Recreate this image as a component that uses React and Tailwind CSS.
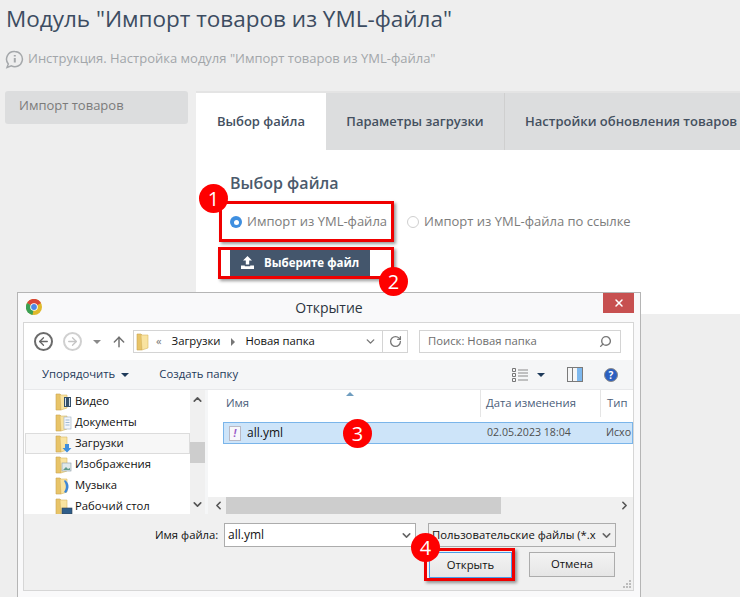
import React from 'react';
import { ArrowLeft, ArrowRight, ArrowUp, ChevronDown, ChevronLeft, ChevronRight, ChevronUp, RotateCw, Search, X } from 'lucide-react';

const navItems = [
  { label: 'Видео', badge: 'video' },
  { label: 'Документы', badge: 'doc' },
  { label: 'Загрузки', badge: 'down', active: true },
  { label: 'Изображения', badge: 'image' },
  { label: 'Музыка', badge: 'music' },
  { label: 'Рабочий стол', badge: 'desk' },
];

const Folder = ({ badge }) => (
  <svg width="18" height="18" viewBox="0 0 18 18" className="shrink-0">
    <path d="M1 1h4l1 1v15H1z" fill="#e8c468" stroke="#c9a552" strokeWidth="0.6" />
    <path d="M5 2h7v13l-6 2z" fill="#f9e3a0" stroke="#d8b865" strokeWidth="0.6" />
    {badge === 'video' && <rect x="9" y="4" width="7" height="10" fill="#35506a" />}
    {badge === 'video' && <path d="M10 5h1v8h-1zM14 5h1v8h-1z" fill="#d7e3ea" />}
    {badge === 'doc' && <rect x="9" y="3" width="7" height="12" fill="#f3f6fa" stroke="#9fb0c0" strokeWidth="0.6" />}
    {badge === 'doc' && <path d="M10.5 6h4M10.5 8.5h4M10.5 11h4" stroke="#7ba0c4" strokeWidth="0.7" />}
    {badge === 'down' && <path d="M10 9h4v4h2.5L12 17.5 7.5 13H10z" fill="#3f8fdd" />}
    {badge === 'image' && <rect x="7" y="7" width="9" height="8" fill="#dfe8ea" stroke="#8a9aa5" strokeWidth="0.6" />}
    {badge === 'image' && <path d="M8 14l3-3 2 2 2-1v2z" fill="#5f9a8a" />}
    {badge === 'music' && <path d="M10 3c4 3 5 8 1 13l-2-1c3-4 2-8 0-11z" fill="#3f87d6" />}
    {badge === 'desk' && <rect x="7" y="10" width="10" height="6" fill="#2f5d8a" stroke="#33404d" strokeWidth="0.6" />}
  </svg>
);

const Chrome = () => (
  <svg width="16" height="16" viewBox="0 0 16 16">
    <circle cx="8" cy="8" r="8" fill="#e0b92b" />
    <path d="M8 8 1 4a8 8 0 0 1 14 0z" fill="#d9453a" />
    <path d="M8 8 1 4a8 8 0 0 0 5.5 11.9z" fill="#3ba055" />
    <circle cx="8" cy="8" r="3.8" fill="#fff" />
    <circle cx="8" cy="8" r="2.9" fill="#4c87e8" />
  </svg>
);

const Marker = ({ n, className }) => (
  <div className={`absolute w-[29px] h-[29px] rounded-full bg-[#fe0000] text-white text-[20px] leading-[29px] text-center ${className}`}>
    {n}
  </div>
);

const RedBox = ({ className }) => (
  <div className={`absolute border-[3px] border-[#f00000] shadow-[2px_2px_3px_rgba(0,0,0,0.4)] ${className}`} />
);

const OpenDialog = () => (
  <div className="absolute left-[17px] top-[292px] w-[624px] h-[305px] flex flex-col bg-[#f9f9fa] border border-[#b5b5b5] border-b-0 font-['Open_Sans',sans-serif] text-[11.3px] text-[#111111]">
    {/* Title bar */}
    <div className="relative h-[29px] shrink-0 flex items-center justify-center">
      <div className="absolute left-[8px] top-[6px]"><Chrome /></div>
      <span className="text-[14px] text-[#2c3540] mt-[-1px]">Открытие</span>
      <div className="absolute right-[6px] top-0 w-[31px] h-[20px] bg-[#c75050] flex items-center justify-center">
        <X size={12} color="#fff" strokeWidth={3} />
      </div>
    </div>

    <div className="mx-[5px] w-[611px] h-[269px] shrink-0 flex flex-col border border-[#d6d6d6] bg-white">
      {/* Address row */}
      <div className="h-[37px] shrink-0 flex items-center pl-[10px]">
        <div className="w-[19px] h-[19px] rounded-full border-2 border-[#6b6b6b] flex items-center justify-center">
          <ArrowLeft size={13} color="#666" strokeWidth={2.4} />
        </div>
        <div className="ml-[10px] w-[19px] h-[19px] rounded-full border-2 border-[#d0d0d0] flex items-center justify-center">
          <ArrowRight size={13} color="#c4c4c4" strokeWidth={2.4} />
        </div>
        <div className="ml-[11px] w-0 h-0 border-x-[4px] border-x-transparent border-t-[4px] border-t-[#8a8a8a]" />
        <ArrowUp size={16} color="#707070" strokeWidth={2.2} className="ml-[10px]" />
        <div className="ml-[6px] w-[275px] h-[23px] flex items-center border border-[#d4d4d4] pl-[2px]">
          <Folder />
          <span className="ml-[2px] text-[#777]">«</span>
          <span className="ml-[10px]">Загрузки</span>
          <div className="ml-[11px] w-0 h-0 border-y-[4px] border-y-transparent border-l-[4px] border-l-[#777]" />
          <span className="ml-[10px]">Новая папка</span>
          <div className="ml-auto w-[24px] h-full flex items-center justify-center">
            <ChevronDown size={13} color="#777" strokeWidth={2.6} />
          </div>
          <div className="w-[25px] h-full border-l border-[#d4d4d4] flex items-center justify-center">
            <RotateCw size={13} color="#777" strokeWidth={2.4} />
          </div>
        </div>
        <div className="ml-[11px] w-[202px] h-[23px] flex items-center justify-between border border-[#d4d4d4] pl-[8px] pr-[8px] text-[#6d6d6d]">
          <span>Поиск: Новая папка</span>
          <Search size={13} color="#777" strokeWidth={2.6} className="-scale-x-100" />
        </div>
      </div>

      {/* Toolbar */}
      <div className="h-[30px] shrink-0 flex items-center bg-[#f5f6f7] border-b border-[#e8e9eb] pl-[18px] pr-[15px] text-[#1e3a5a]">
        <span>Упорядочить</span>
        <div className="ml-[6px] w-0 h-0 border-x-[4px] border-x-transparent border-t-[4px] border-t-[#1e3a5a]" />
        <span className="ml-[30px]">Создать папку</span>
        <svg width="16" height="14" viewBox="0 0 16 14" className="ml-auto">
          <path d="M.5 .5h3v3h-3zM.5 5.5h3v3h-3zM.5 10.5h3v3h-3z" fill="none" stroke="#777" />
          <path d="M6 2h10M6 5h10M6 8h10M6 12h10" stroke="#8a8a8a" strokeWidth="1" />
        </svg>
        <div className="ml-[9px] w-0 h-0 border-x-[4px] border-x-transparent border-t-[4px] border-t-[#1e3a5a]" />
        <div className="ml-[22px] w-[16px] h-[15px] flex border border-[#7a7a7a]">
          <div className="w-[5px] border-r border-[#7a7a7a]" />
          <div className="flex-1" />
          <div className="w-[5px] bg-[#7db8ee]" />
        </div>
        <div className="ml-[21px] w-[14px] h-[14px] rounded-full bg-[#2b5fc0] border border-[#8a8a8a] text-white text-[10px] font-bold leading-[12px] text-center">?</div>
      </div>

      {/* Panes */}
      <div className="h-[124px] shrink-0 flex">
        <div className="w-[166px] shrink-0 pt-[1px] pl-[1px]">
          {navItems.map((item) => (
            <div
              key={item.label}
              className={`h-[21px] flex items-center pl-[29px] border ${item.active ? 'bg-[#f7f7f7] border-[#dcdcdc]' : 'border-transparent'}`}
            >
              <Folder badge={item.badge} />
              <span className="ml-[2px]">{item.label}</span>
            </div>
          ))}
        </div>
        <div className="w-[15px] shrink-0 flex flex-col items-center justify-between bg-[#f0f0f0] py-[3px]">
          <ChevronUp size={13} color="#555" strokeWidth={3} />
          <div className="w-full h-[21px] bg-[#cdcdcd]" />
          <ChevronDown size={13} color="#555" strokeWidth={3} />
        </div>
        <div className="w-[3px] shrink-0 bg-[#f5f6f7]" />

        <div className="flex-1 min-w-0 flex flex-col">
          <div className="relative h-[27px] shrink-0 flex items-center text-[#4c607a]">
            <span className="ml-[18px]">Имя</span>
            <div className="absolute left-[138px] top-[2px] w-0 h-0 border-x-[4px] border-x-transparent border-b-[4px] border-b-[#6f9dbf]" />
            <div className="absolute left-[272px] top-0 h-full border-l border-[#e5e5e5]" />
            <span className="absolute left-[278px]">Дата изменения</span>
            <div className="absolute left-[392px] top-0 h-full border-l border-[#e5e5e5]" />
            <span className="absolute left-[399px]">Тип</span>
          </div>
          <div className="mt-[5px] ml-[15px] h-[22px] shrink-0 flex items-center bg-[#cde4f9] border border-[#7ab5ea] overflow-hidden pl-[5px] whitespace-nowrap">
            <div className="w-[12px] h-[15px] bg-[#f8f8fb] border border-[#b9b9c4] text-[#9a5cc8] text-[10px] font-bold italic leading-[13px] text-center">!</div>
            <span className="ml-[6px] w-[240px] text-[12px]">all.yml</span>
            <span className="text-[#4f4f4f] w-[120px] text-[10.6px]">02.05.2023 18:04</span>
            <span className="text-[#4f4f4f] ml-[-1px] text-[10.6px]">Исхо</span>
          </div>
          <div className="flex-1" />
          <div className="h-[17px] shrink-0 flex items-center bg-[#f0f0f0]">
            <ChevronLeft size={13} color="#555" strokeWidth={3} className="ml-[3px] w-[15px]" />
            <div className="w-[275px] h-full bg-[#cdcdcd]" />
            <ChevronRight size={13} color="#555" strokeWidth={3} className="ml-auto mr-[2px]" />
          </div>
        </div>
      </div>

      {/* Footer */}
      <div className="relative flex-1 bg-[#f0f0f0]">
        <div className="flex items-center mt-[9px]">
          <span className="ml-[131px] w-[69px]">Имя файла:</span>
          <div className="w-[192px] h-[24px] bg-white border border-[#acacac] flex items-center justify-between pl-[3px] pr-[2px]">
            <span className="text-[12px]">all.yml</span>
            <ChevronDown size={13} color="#666" strokeWidth={2.8} />
          </div>
          <div className="ml-[12px] w-[188px] h-[24px] border border-[#acacac] flex items-center justify-between pl-[3px] pr-[2px] overflow-hidden whitespace-nowrap">
            <span>Пользовательские файлы (*.x</span>
            <ChevronDown size={13} color="#666" strokeWidth={2.8} className="shrink-0" />
          </div>
        </div>
        <div className="flex mt-[5px] ml-[405px]">
          <div className="w-[83px] h-[26px] flex items-center justify-center border border-[#4a9ce8] bg-gradient-to-b from-[#f3f3f3] to-[#e6e6e6]">Открыть</div>
          <div className="ml-[17px] w-[86px] h-[25px] flex items-center justify-center border border-[#acacac] bg-gradient-to-b from-[#f3f3f3] to-[#e6e6e6]">Отмена</div>
        </div>
        <svg width="9" height="9" viewBox="0 0 9 9" className="absolute right-[1px] bottom-[1px]">
          <path d="M6 0h2v2H6zM3 3h2v2H3zM6 3h2v2H6zM0 6h2v2H0zM3 6h2v2H3zM6 6h2v2H6z" fill="#bcbcbc" />
        </svg>
      </div>
    </div>
  </div>
);

export default function App() {
  return (
    <div className="relative w-[740px] h-[597px] overflow-hidden bg-[#eeeeee] font-['Open_Sans',sans-serif]">
      <h1 className="pl-[6px] pt-[1px] text-[22.5px] leading-[36px] text-[#3c4c61] whitespace-nowrap">
        Модуль "Импорт товаров из YML-файла"
      </h1>
      <div className="mt-[12px] ml-[5px] h-[20px] flex items-center gap-[4px] text-[13px] text-[#a2a6aa]">
        <svg width="19" height="19" viewBox="0 0 19 19" fill="none" stroke="#a5a8ab" strokeWidth="1.5">
          <path d="M9.8 1.5a7.6 7.6 0 1 1-3.4 14.4L2 17.5l1.3-3.6A7.6 7.6 0 0 1 9.8 1.5z" />
          <path d="M9.8 5v1.5M9.8 8v4.5" strokeWidth="2" />
        </svg>
        <span>Инструкция. Настройка модуля "Импорт товаров из YML-файла"</span>
      </div>

      <div className="mt-[22px] flex items-start">
        <div className="ml-[5px] w-[183px] h-[33px] rounded-[3px] bg-[#dcddde] pl-[14px] text-[13px] leading-[29px] text-[#7b7b7b]">
          Импорт товаров
        </div>
        <div className="ml-[8px] flex-1">
          <div className="h-[59px] flex border-t-2 border-[#e4e4e4] bg-[#dcddde] text-[13px] font-semibold text-[#44505f]">
            <div className="w-[130px] bg-white flex items-center justify-center">Выбор файла</div>
            <div className="w-[179px] flex items-center justify-center border-r border-[#cfcfcf]">Параметры загрузки</div>
            <div className="pl-[20px] flex items-center whitespace-nowrap">Настройки обновления товаров</div>
          </div>
          <div className="h-[164px] bg-white pl-[34px] pt-[22px]">
            <div className="text-[16px] leading-[22px] font-semibold text-[#4a5a6c]">Выбор файла</div>
            <div className="mt-[18px] h-[20px] flex items-center text-[13px] text-[#7c7c7c]">
              <div className="w-[12px] h-[12px] rounded-full bg-[#3f8fe0] flex items-center justify-center">
                <div className="w-[5px] h-[5px] rounded-full bg-white" />
              </div>
              <span className="ml-[5px]">Импорт из YML-файла</span>
              <div className="ml-[20px] w-[12px] h-[12px] rounded-full bg-white border border-[#cfcfcf]" />
              <span className="ml-[5px]">Импорт из YML-файла по ссылке</span>
            </div>
            <div className="mt-[17px] w-[140px] h-[28px] bg-[#44566c] flex items-center pl-[11px] pb-[1px] text-[11.5px] font-bold text-white">
              <svg width="13" height="13" viewBox="0 0 13 13" fill="#fff">
                <path d="M6.5 0 11 4.5H8.2v4H4.8v-4H2zM0 9.5h3.8v.8h5.4v-.8H13V13H0z" />
              </svg>
              <span className="ml-[10px]">Выберите файл</span>
            </div>
          </div>
        </div>
      </div>

      <OpenDialog />

      {/* Annotations */}
      <RedBox className="left-[219px] top-[201px] w-[175px] h-[41px]" />
      <RedBox className="left-[218px] top-[247px] w-[176px] h-[32px]" />
      <RedBox className="left-[424px] top-[548px] w-[91px] h-[33px]" />
      <Marker n="1" className="left-[199px] top-[184px]" />
      <Marker n="2" className="left-[379px] top-[267px]" />
      <Marker n="3" className="left-[343px] top-[419px]" />
      <Marker n="4" className="left-[411px] top-[533px]" />
    </div>
  );
}
